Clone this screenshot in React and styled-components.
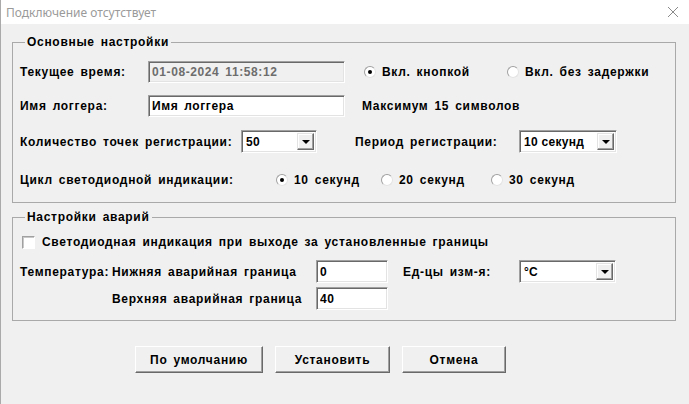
import React from 'react';
import styled, { createGlobalStyle } from 'styled-components';

// GLOBAL
const GlobalStyle = createGlobalStyle`
  html, body {
    margin: 0;
    padding: 0;
    background: #f0f0f0;
  }
  * {
    box-sizing: border-box;
  }
`;

// WINDOW
const Window = styled.div`
  width: 689px;
  height: 404px;
  background: #f0f0f0;
  border-left: 1px solid #aaaaaa;
  font-family: "Liberation Sans", Arial, sans-serif;
  font-size: 12px;
  font-weight: bold;
  letter-spacing: 0.7px;
  word-spacing: 2px;
  color: #000;
  overflow: hidden;
`;

const TitleBar = styled.div`
  height: 24px;
  background: #ffffff;
  display: flex;
  align-items: center;
  justify-content: space-between;
  padding: 0 10px 0 5px;
  font-family: "Noto Sans", "Open Sans", sans-serif;
  font-weight: normal;
  font-size: 12px;
  letter-spacing: 0;
  word-spacing: 0;
  color: #9a9a9a;
`;

const Body = styled.div`
  padding: 11px 13px 0 11px;
`;

// GROUP BOX
const Group = styled.fieldset`
  margin: ${p => p.$mt || 0}px 0 0 0;
  padding: 0 0 ${p => p.$pb}px 7px;
  border: 1px solid #a9a9a9;
  min-width: 0;
`;

const Legend = styled.legend`
  padding: 0 2px;
  margin-left: 5px;
  line-height: 14px;
  font-size: 12px;
`;

const Row = styled.div`
  display: flex;
  align-items: center;
  height: ${p => p.$h || 22}px;
  margin-top: ${p => p.$mt || 0}px;
`;

const Label = styled.span`
  flex: none;
  width: ${p => (p.$w ? `${p.$w}px` : 'auto')};
  margin-left: ${p => p.$ml || 0}px;
  white-space: nowrap;
`;

// FIELDS
const Field = styled.input`
  flex: none;
  width: ${p => p.$w}px;
  height: ${p => p.$h || 22}px;
  margin: 0 0 0 ${p => p.$ml || 0}px;
  padding: 0 3px;
  border: 1px solid;
  border-color: #a0a0a0 #ffffff #ffffff #a0a0a0;
  box-shadow: inset 1px 1px #696969, inset -1px -1px #e3e3e3;
  background: ${p => (p.$off ? '#f0f0f0' : '#ffffff')};
  color: ${p => (p.$off ? '#6d6d6d' : '#000000')};
  font-family: inherit;
  font-size: 12px;
  font-weight: bold;
  letter-spacing: 0.6px;
  word-spacing: inherit;
  outline: none;
`;

const Combo = styled.div`
  flex: none;
  display: flex;
  align-items: center;
  width: ${p => p.$w}px;
  height: 23px;
  margin-left: ${p => p.$ml || 0}px;
  padding: 2px;
  border: 1px solid;
  border-color: #a0a0a0 #ffffff #ffffff #a0a0a0;
  box-shadow: inset 1px 1px #696969, inset -1px -1px #e3e3e3;
  background: #ffffff;
`;

const ComboText = styled.span`
  flex: 1;
  padding-left: 2px;
  letter-spacing: 0.3px;
  word-spacing: 0;
  white-space: nowrap;
`;

const DropButton = styled.span`
  flex: none;
  width: 17px;
  height: 17px;
  display: flex;
  align-items: center;
  justify-content: center;
  background: #f0f0f0;
  border: 1px solid;
  border-color: #e3e3e3 #696969 #696969 #e3e3e3;
  box-shadow: inset -1px -1px #a0a0a0, inset 1px 1px #ffffff;
  &::after {
    content: '';
    border-left: 4px solid transparent;
    border-right: 4px solid transparent;
    border-top: 4px solid #000;
  }
`;

// RADIO / CHECK
const RadioItem = styled.label`
  flex: none;
  display: flex;
  align-items: center;
  gap: ${p => p.$gap || 6}px;
  width: ${p => (p.$w ? `${p.$w}px` : 'auto')};
  margin-left: ${p => p.$ml || 0}px;
  white-space: nowrap;
`;

const RadioDot = styled.span`
  flex: none;
  width: 12px;
  height: 12px;
  border-radius: 50%;
  border: 1px solid;
  border-color: #a0a0a0 #e3e3e3 #e3e3e3 #a0a0a0;
  background: #ffffff;
  display: flex;
  align-items: center;
  justify-content: center;
  &::after {
    content: '';
    width: 4px;
    height: 4px;
    border-radius: 50%;
    background: ${p => (p.$on ? '#000' : 'transparent')};
  }
`;

const CheckBox = styled.span`
  flex: none;
  width: 13px;
  height: 13px;
  background: #ffffff;
  border: 1px solid;
  border-color: #a0a0a0 #ffffff #ffffff #a0a0a0;
  box-shadow: inset 1px 1px #c8c8c8;
`;

// LOWER GROUP GRID
const AlarmGrid = styled.div`
  display: grid;
  grid-template-columns: 92px 204px 87px 116px auto;
  grid-template-rows: 23px 23px;
  row-gap: 4px;
  align-items: center;
  margin-top: 10px;
`;

const Cell = styled.span`
  white-space: nowrap;
  grid-column: ${p => p.$col};
  grid-row: ${p => p.$row};
`;

// BUTTONS
const ButtonBar = styled.div`
  display: flex;
  gap: 12px;
  padding-left: 123px;
  margin-top: 25px;
`;

const Button = styled.button`
  width: ${p => p.$w}px;
  height: 27px;
  padding: 0;
  background: #f0f0f0;
  border: 1px solid;
  border-color: #ffffff #696969 #696969 #ffffff;
  box-shadow: inset -1px -1px #a0a0a0;
  font-family: inherit;
  font-size: 12px;
  font-weight: bold;
  letter-spacing: inherit;
  word-spacing: inherit;
  color: #000;
`;

const Close = () => (
  <svg width="12" height="12" viewBox="0 0 12 12">
    <path d="M1 1 L11 11 M11 1 L1 11" stroke="#8a8a8a" strokeWidth="1" fill="none" />
  </svg>
);

const Radio = ({ on, children, ...rest }) => (
  <RadioItem {...rest}>
    <RadioDot $on={on} />
    {children}
  </RadioItem>
);

const Select = ({ value, ...rest }) => (
  <Combo {...rest}>
    <ComboText>{value}</ComboText>
    <DropButton />
  </Combo>
);

const App = () => (
  <>
    <GlobalStyle />
    <Window>
      <TitleBar>
        <span>Подключение отсутствует</span>
        <Close />
      </TitleBar>
      <Body>
        <Group $pb={14}>
          <Legend>Основные настройки</Legend>
          <Row $mt={12}>
            <Label $w={128}>Текущее время:</Label>
            <Field $w={197} $off readOnly value="01-08-2024 11:58:12" />
            <Radio on $ml={19} $w={143}>Вкл. кнопкой</Radio>
            <Radio>Вкл. без задержки</Radio>
          </Row>
          <Row $mt={12}>
            <Label $w={128}>Имя логгера:</Label>
            <Field $w={197} readOnly value="Имя логгера" />
            <Label $ml={17}>Максимум 15 символов</Label>
          </Row>
          <Row $mt={13} $h={23}>
            <Label $w={221}>Количество точек регистрации:</Label>
            <Select $w={76} value="50" />
            <Label $ml={38} $w={164}>Период регистрации:</Label>
            <Select $w={98} value="10 секунд" />
          </Row>
          <Row $mt={19} $h={16}>
            <Label $w={256}>Цикл светодиодной индикации:</Label>
            <Radio on $w={105}>10 секунд</Radio>
            <Radio $w={110}>20 секунд</Radio>
            <Radio>30 секунд</Radio>
          </Row>
        </Group>

        <Group $mt={7} $pb={10}>
          <Legend>Настройки аварий</Legend>
          <Row $mt={10} $h={16}>
            <RadioItem $ml={2} $gap={7}>
              <CheckBox />
              Светодиодная индикация при выходе за установленные границы
            </RadioItem>
          </Row>
          <AlarmGrid>
            <Cell $col={1} $row={1}>Температура:</Cell>
            <Cell $col={2} $row={1}>Нижняя аварийная граница</Cell>
            <Field $w={72} $h={23} readOnly value="0" style={{ gridColumn: 3, gridRow: 1 }} />
            <Cell $col={4} $row={1}>Ед-цы изм-я:</Cell>
            <Select $w={97} value="°C" style={{ gridColumn: 5, gridRow: 1 }} />
            <Cell $col={2} $row={2}>Верхняя аварийная граница</Cell>
            <Field $w={72} $h={23} readOnly value="40" style={{ gridColumn: 3, gridRow: 2 }} />
          </AlarmGrid>
        </Group>

        <ButtonBar>
          <Button $w={128}>По умолчанию</Button>
          <Button $w={115}>Установить</Button>
          <Button $w={104}>Отмена</Button>
        </ButtonBar>
      </Body>
    </Window>
  </>
);

export default App;
